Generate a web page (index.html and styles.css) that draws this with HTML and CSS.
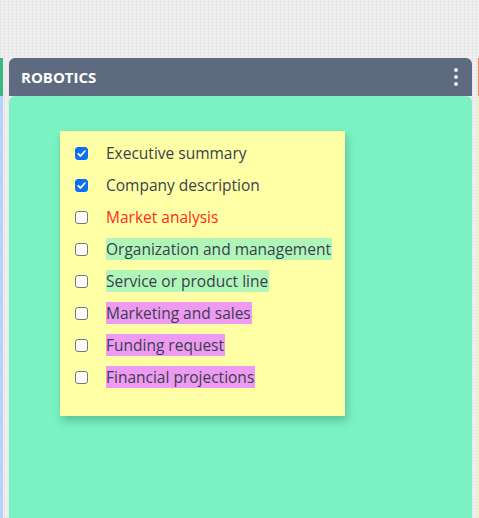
FILE: index.html
```html
<!DOCTYPE html>
<html>
<head>
<meta charset="utf-8">
<link rel="stylesheet" href="styles.css">
</head>
<body>
<div class="board">
  <div class="edge edge-left"></div>
  <section class="column">
    <header class="column-head">
      <span class="title">ROBOTICS</span>
      <span class="menu"><i></i><i></i><i></i></span>
    </header>
    <div class="column-body">
      <div class="note">
        <ul class="list">
          <li><span class="box checked"><svg viewBox="0 0 13 13" width="13" height="13"><path d="M3.3 6.8 L5.5 9 L9.8 4.2" fill="none" stroke="#fff" stroke-width="1.8" stroke-linecap="round" stroke-linejoin="round"/></svg></span><span class="txt">Executive summary</span></li>
          <li><span class="box checked"><svg viewBox="0 0 13 13" width="13" height="13"><path d="M3.3 6.8 L5.5 9 L9.8 4.2" fill="none" stroke="#fff" stroke-width="1.8" stroke-linecap="round" stroke-linejoin="round"/></svg></span><span class="txt">Company description</span></li>
          <li><span class="box"></span><span class="txt red">Market analysis</span></li>
          <li><span class="box"></span><span class="txt hl-green">Organization and management</span></li>
          <li><span class="box"></span><span class="txt hl-green">Service or product line</span></li>
          <li><span class="box"></span><span class="txt hl-pink">Marketing and sales</span></li>
          <li><span class="box"></span><span class="txt hl-pink">Funding request</span></li>
          <li><span class="box"></span><span class="txt hl-pink">Financial projections</span></li>
        </ul>
      </div>
    </div>
  </section>
  <div class="edge edge-right"></div>
</div>
</body>
</html>
```
FILE: styles.css
```css
* { box-sizing: border-box; }
html, body { margin: 0; padding: 0; }
body {
  width: 479px;
  height: 518px;
  overflow: hidden;
  font-family: "Open Sans", "Noto Sans", sans-serif;
  background-color: #efefef;
  background-image:
    repeating-linear-gradient(90deg, rgba(0,0,0,0.025) 0 1px, transparent 1px 4px),
    repeating-linear-gradient(0deg, rgba(0,0,0,0.02) 0 1px, transparent 1px 3px);
}
.board {
  display: flex;
  padding-top: 58px;
  height: 518px;
  gap: 6px;
}
.edge { width: 3px; flex: none; }
.edge-left {
  background: linear-gradient(#3db584 0 38px, #b6d3f7 38px);
}
.edge-right {
  background: linear-gradient(#f2865c 0 38px, #f4e9b0 38px);
  margin-left: auto;
}
.column {
  width: 463px;
  flex: none;
  display: flex;
  flex-direction: column;
  border-radius: 6px 6px 0 0;
  overflow: hidden;
}
.column-head {
  height: 38px;
  background: #5d6a80;
  display: flex;
  align-items: center;
  justify-content: space-between;
  padding: 0 14px 0 12px;
}
.title {
  color: #fff;
  font-family: "Open Sans", sans-serif;
  font-weight: 700;
  font-size: 15px;
  letter-spacing: 0;
}
.menu {
  display: flex;
  flex-direction: column;
  gap: 3px;
}
.menu i {
  width: 4px;
  height: 4px;
  border-radius: 50%;
  background: #e8ecf2;
  display: block;
}
.column-body {
  flex: 1;
  background: #7af2c2;
  border-radius: 6px 6px 0 0;
  padding: 35px 0 0 51px;
}
.note {
  width: 285px;
  height: 285px;
  background: #ffffa5;
  box-shadow: 2px 5px 8px rgba(40, 110, 80, 0.35);
  padding: 6px 0 0 15px;
}
.list {
  list-style: none;
  margin: 0;
  padding: 0;
}
.list li {
  display: flex;
  align-items: center;
  height: 32px;
}
.box {
  width: 13px;
  height: 13px;
  border: 1px solid #767676;
  border-radius: 3px;
  background: #fff;
  flex: none;
  margin-right: 18px;
  display: flex;
}
.box.checked {
  background: #0b6ef5;
  border-color: #0b6ef5;
}
.box.checked svg { margin: -1px; }
.txt {
  font-size: 15.5px;
  color: #3a3f4d;
  line-height: 22px;
  letter-spacing: 0;
  padding: 0 1px 0 0;
}
.red { color: #ff2a1f; }
.hl-green { background: #b0f6b9; }
.hl-pink { background: #ee9af2; }
```
